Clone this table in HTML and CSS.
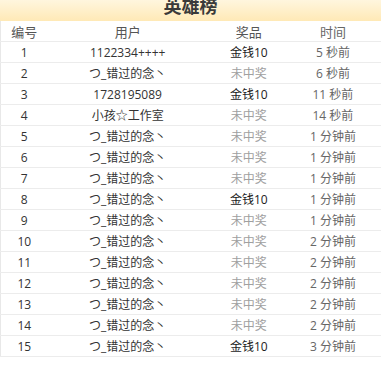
FILE: index.html
```html
<!DOCTYPE html>
<html lang="zh">
<head>
<meta charset="utf-8">
<link rel="stylesheet" href="styles.css">
</head>
<body>
<div class="board">
  <div class="title">英雄榜</div>
  <table class="list">
    <colgroup>
      <col class="c-no"><col class="c-user"><col class="c-prize"><col class="c-time">
    </colgroup>
    <thead>
      <tr><th>编号</th><th>用户</th><th>奖品</th><th class="t">时间</th></tr>
    </thead>
    <tbody>
      <tr><td>1</td><td>1122334++++</td><td class="win">金钱10</td><td class="t">5 秒前</td></tr>
      <tr><td>2</td><td>つ_错过的念丶</td><td class="no">未中奖</td><td class="t">6 秒前</td></tr>
      <tr><td>3</td><td>1728195089</td><td class="win">金钱10</td><td class="t">11 秒前</td></tr>
      <tr><td>4</td><td>小孩☆工作室</td><td class="no">未中奖</td><td class="t">14 秒前</td></tr>
      <tr><td>5</td><td>つ_错过的念丶</td><td class="no">未中奖</td><td class="t">1 分钟前</td></tr>
      <tr><td>6</td><td>つ_错过的念丶</td><td class="no">未中奖</td><td class="t">1 分钟前</td></tr>
      <tr><td>7</td><td>つ_错过的念丶</td><td class="no">未中奖</td><td class="t">1 分钟前</td></tr>
      <tr><td>8</td><td>つ_错过的念丶</td><td class="win">金钱10</td><td class="t">1 分钟前</td></tr>
      <tr><td>9</td><td>つ_错过的念丶</td><td class="no">未中奖</td><td class="t">1 分钟前</td></tr>
      <tr><td>10</td><td>つ_错过的念丶</td><td class="no">未中奖</td><td class="t">2 分钟前</td></tr>
      <tr><td>11</td><td>つ_错过的念丶</td><td class="no">未中奖</td><td class="t">2 分钟前</td></tr>
      <tr><td>12</td><td>つ_错过的念丶</td><td class="no">未中奖</td><td class="t">2 分钟前</td></tr>
      <tr><td>13</td><td>つ_错过的念丶</td><td class="no">未中奖</td><td class="t">2 分钟前</td></tr>
      <tr><td>14</td><td>つ_错过的念丶</td><td class="no">未中奖</td><td class="t">2 分钟前</td></tr>
      <tr><td>15</td><td>つ_错过的念丶</td><td class="win">金钱10</td><td class="t">3 分钟前</td></tr>
    </tbody>
  </table>
</div>
</body>
</html>
```
FILE: styles.css
```css
html, body {
  margin: 0;
  padding: 0;
  background: #fff;
  overflow: hidden;
}
body {
  font-family: "Open Sans", "Noto Sans CJK SC", sans-serif;
  font-size: 12px;
  color: #333;
}
.board {
  width: 381px;
}
.title {
  height: 21px;
  line-height: 10px;
  overflow: hidden;
  text-align: center;
  font-family: "Noto Sans CJK SC", sans-serif;
  font-size: 18px;
  font-weight: bold;
  color: #3a3a3a;
  background: linear-gradient(to bottom, #fff6de, #ffe9b6);
}
.list {
  width: 381px;
  border-collapse: collapse;
  table-layout: fixed;
  border-left: 1px solid #e8e8e8;
}
.c-no { width: 47px; }
.c-user { width: 160px; }
.c-prize { width: 82px; }
.c-time { width: 91px; }
.list th,
.list td {
  height: 20px;
  padding: 0;
  text-align: center;
  border-bottom: 1px solid #ececec;
  white-space: nowrap;
}
.list th {
  font-weight: normal;
  font-size: 13px;
  color: #555;
}
.list .t {
  padding-right: 5px;
  color: #666;
}
.list .win { color: #222; }
.list .no { color: #a0a0a0; }
```
